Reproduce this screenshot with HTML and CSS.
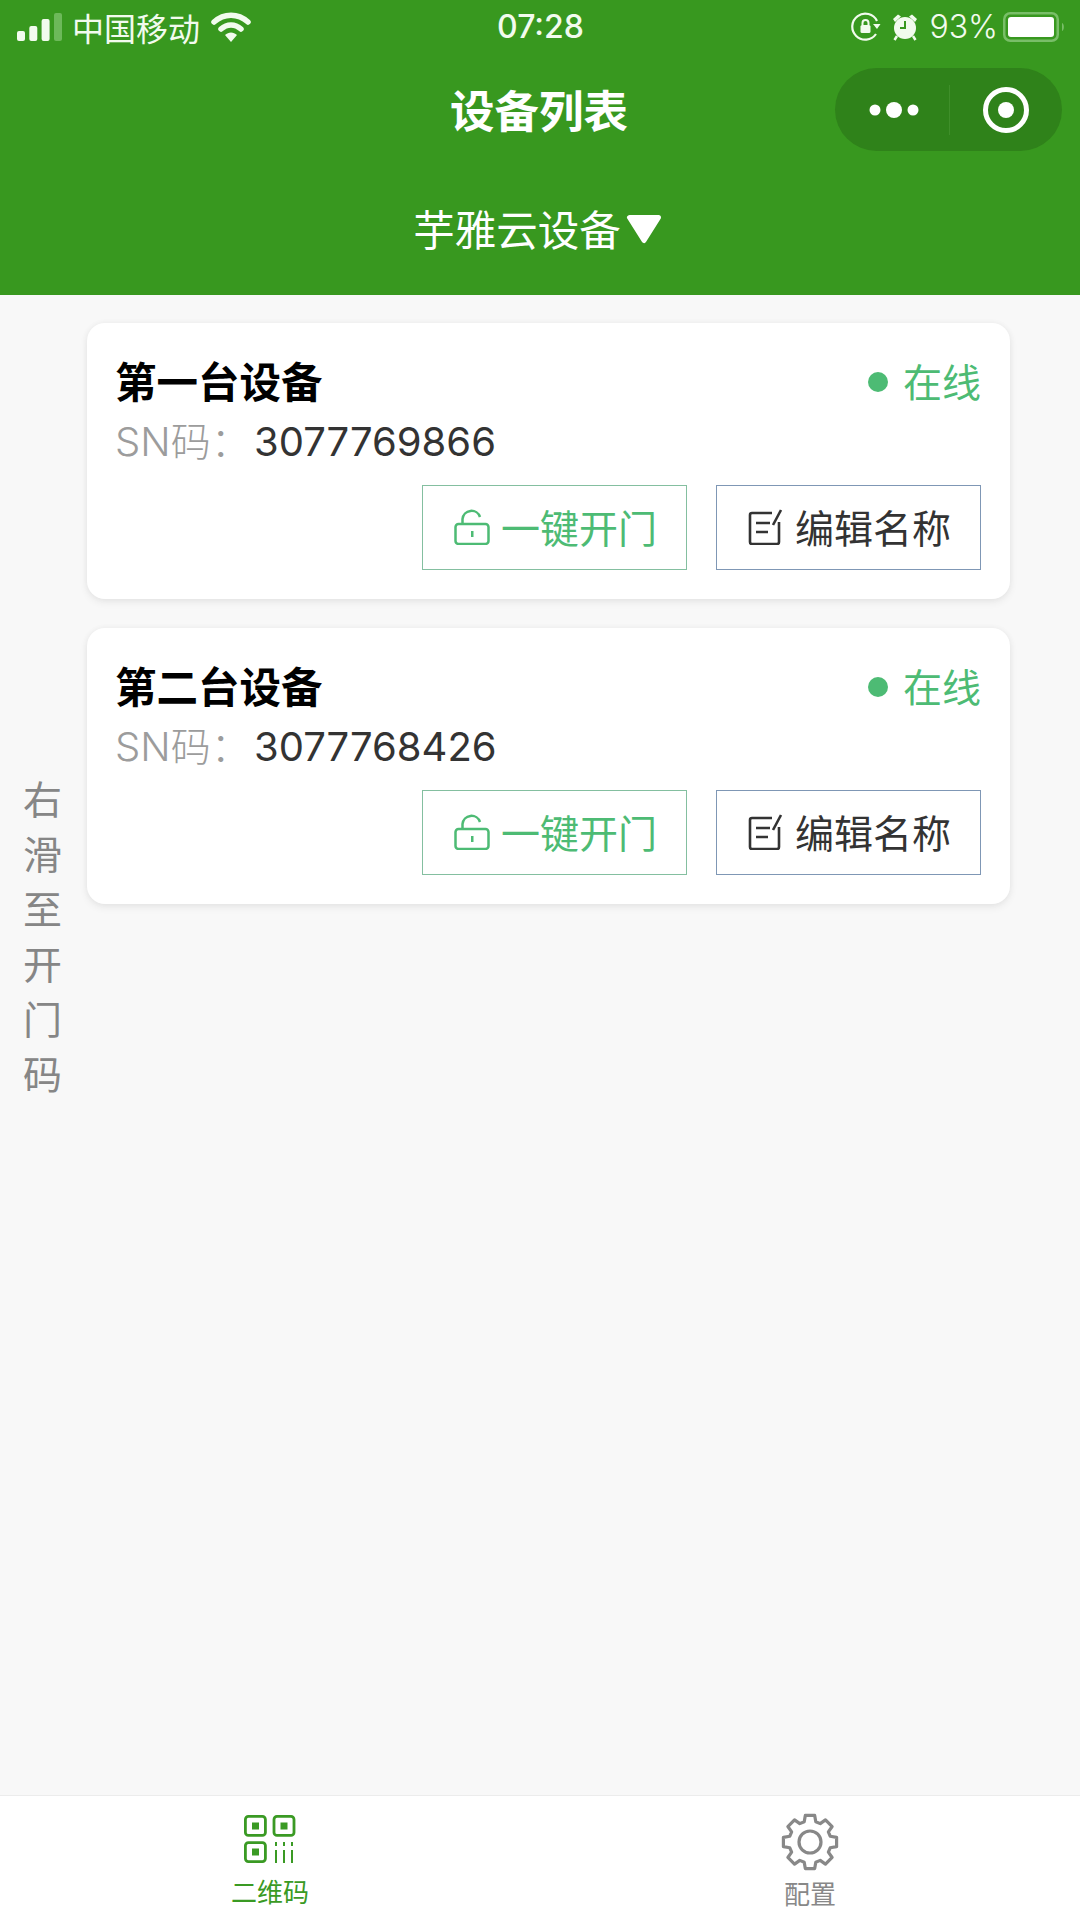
FILE: index.html
```html
<!DOCTYPE html>
<html lang="zh-CN">
<head>
<meta charset="utf-8">
<title>设备列表</title>
<link rel="stylesheet" href="styles.css">
</head>
<body>
<div class="page">
  <header class="header">
    <div class="status">
      <div class="status-left">
        <svg class="signal" viewBox="0 0 46 28" width="46" height="28"><rect x="0" y="18" width="8" height="10" rx="2" fill="#f2fbee"/><rect x="12.300" y="13" width="8" height="15" rx="2" fill="#f2fbee"/><rect x="24.600" y="6" width="8" height="22" rx="2" fill="#f2fbee"/><rect x="37" y="0" width="8" height="28" rx="2" fill="#6db95a"/></svg>
        <span class="carrier">中国移动</span>
        <svg class="wifi" viewBox="0 0 40 30" width="40" height="30"><path d="M3 10C13 1 27 1 37 10" fill="none" stroke="#f2fbee" stroke-width="5.500" stroke-linecap="round"/><path d="M10 17C16 11.500 24 11.500 30 17" fill="none" stroke="#f2fbee" stroke-width="5.500" stroke-linecap="round"/><path d="M14 23C17.500 19.500 22.500 19.500 26 23L20 30Z" fill="#f2fbee"/></svg>
      </div>
      <span class="time">07:28</span>
      <div class="status-right">
        <svg class="rotate" viewBox="0 0 30 30" width="30" height="30"><path d="M25 22A13 13 0 1 1 26 9" fill="none" stroke="#f2fbee" stroke-width="2.200"/><path d="M22 12L29.500 12L26 17Z" fill="#f2fbee"/><rect x="9.500" y="13" width="10" height="8" rx="1.500" fill="#f2fbee"/><path d="M11.500 13V11A3 3 0 0 1 17.500 11V13" fill="none" stroke="#f2fbee" stroke-width="2"/></svg>
        <svg class="alarm" viewBox="0 0 26 28" width="26" height="28"><circle cx="13" cy="15" r="11" fill="#f2fbee"/><path d="M13 8V15H8" fill="none" stroke="#38981f" stroke-width="2"/><path d="M1 6L6 1.500L9 3.500L3 9Z M25 6L20 1.500L17 3.500L23 9Z" fill="#f2fbee"/><path d="M5 23L2.500 27M21 23L23.500 27" stroke="#f2fbee" stroke-width="2.500"/></svg>
        <span class="percent">93%</span>
        <svg class="battery" viewBox="0 0 63 30" width="63" height="30"><rect x="1.250" y="1.250" width="53.500" height="27.500" rx="6" fill="none" stroke="#79be68" stroke-width="2.500"/><rect x="5" y="5" width="46" height="20" rx="3" fill="#fff"/><path d="M59 11C61.500 12 61.500 18 59 19Z" fill="#79be68"/></svg>
      </div>
    </div>
    <div class="nav">
      <h1 class="title">设备列表</h1>
      <div class="capsule">
        <svg viewBox="0 0 227 83" width="227" height="83">
          <circle cx="40" cy="42" r="5.500" fill="#fff"/><circle cx="59" cy="42" r="8" fill="#fff"/><circle cx="78" cy="42" r="5.500" fill="#fff"/>
          <rect x="114" y="17" width="1" height="50" fill="#3f8f2a"/>
          <circle cx="171" cy="42" r="20.500" fill="none" stroke="#fff" stroke-width="5"/><circle cx="171" cy="42" r="8" fill="#fff"/>
        </svg>
      </div>
    </div>
    <div class="selector">
      <span>芋雅云设备</span>
      <svg viewBox="0 0 36 30" width="36" height="30"><path d="M3.500 3.500H32.500L18 26.500Z" fill="#fff" stroke="#fff" stroke-width="5" stroke-linejoin="round"/></svg>
    </div>
  </header>

  <main class="main">
    <div class="side-hint">右滑至开门码</div>
    <div class="cards">
      <article class="card">
        <div class="card-top">
          <h2 class="name">第一台设备</h2>
          <div class="online"><i class="dot"></i><span>在线</span></div>
        </div>
        <p class="sn"><span class="sn-label">SN码：</span><span class="sn-value">3077769866</span></p>
        <div class="actions">
          <button class="btn btn-open">
            <svg viewBox="0 0 36 36" width="36" height="36"><rect x="1.500" y="15" width="33" height="20" rx="3" fill="none" stroke="currentColor" stroke-width="2.500"/><path d="M8.500 15V10A9 9 0 0 1 26 8" fill="none" stroke="currentColor" stroke-width="2.500"/><rect x="17" y="22" width="2.500" height="6" fill="currentColor"/></svg>
            <span>一键开门</span>
          </button>
          <button class="btn btn-edit">
            <svg viewBox="0 0 36 36" width="36" height="36"><path d="M24 4H4Q2 4 2 6V33Q2 35 4 35H29Q31 35 31 33V13" fill="none" stroke="currentColor" stroke-width="2.600"/><path d="M8 14H22M8 23H20" stroke="currentColor" stroke-width="2.600"/><path d="M25 16L33 1" stroke="currentColor" stroke-width="2.600"/></svg>
            <span>编辑名称</span>
          </button>
        </div>
      </article>
      <article class="card">
        <div class="card-top">
          <h2 class="name">第二台设备</h2>
          <div class="online"><i class="dot"></i><span>在线</span></div>
        </div>
        <p class="sn"><span class="sn-label">SN码：</span><span class="sn-value">3077768426</span></p>
        <div class="actions">
          <button class="btn btn-open">
            <svg viewBox="0 0 36 36" width="36" height="36"><rect x="1.500" y="15" width="33" height="20" rx="3" fill="none" stroke="currentColor" stroke-width="2.500"/><path d="M8.500 15V10A9 9 0 0 1 26 8" fill="none" stroke="currentColor" stroke-width="2.500"/><rect x="17" y="22" width="2.500" height="6" fill="currentColor"/></svg>
            <span>一键开门</span>
          </button>
          <button class="btn btn-edit">
            <svg viewBox="0 0 36 36" width="36" height="36"><path d="M24 4H4Q2 4 2 6V33Q2 35 4 35H29Q31 35 31 33V13" fill="none" stroke="currentColor" stroke-width="2.600"/><path d="M8 14H22M8 23H20" stroke="currentColor" stroke-width="2.600"/><path d="M25 16L33 1" stroke="currentColor" stroke-width="2.600"/></svg>
            <span>编辑名称</span>
          </button>
        </div>
      </article>
    </div>
  </main>

  <nav class="tabbar">
    <div class="tab tab-active">
      <svg viewBox="0 0 52 48" width="52" height="48"><g fill="none" stroke="currentColor" stroke-width="2.800"><rect x="1.400" y="1.400" width="20" height="19" rx="3"/><rect x="30" y="1.400" width="20" height="19" rx="3"/><rect x="1.400" y="27.600" width="20" height="19" rx="3"/></g><g fill="currentColor"><rect x="8" y="7.500" width="7" height="7"/><rect x="36.500" y="7.500" width="7" height="7"/><rect x="8" y="33.500" width="7" height="7"/></g><path d="M32 27V31M32 35V48M40 27V31M40 35V48M48 27V31M48 35V48" stroke="currentColor" stroke-width="2"/></svg>
      <span>二维码</span>
    </div>
    <div class="tab tab-config">
      <svg viewBox="0 0 60 60" width="60" height="60"><polygon points="24.210,9.810 25.310,3.410 34.690,3.410 35.790,9.810 40.180,11.630 45.490,7.880 52.120,14.510 48.370,19.820 50.190,24.210 56.590,25.310 56.590,34.690 50.190,35.790 48.370,40.180 52.120,45.490 45.490,52.120 40.180,48.370 35.790,50.190 34.690,56.590 25.310,56.590 24.210,50.190 19.820,48.370 14.510,52.120 7.880,45.490 11.630,40.180 9.810,35.790 3.410,34.690 3.410,25.310 9.810,24.210 11.630,19.820 7.880,14.510 14.510,7.880 19.820,11.630" fill="none" stroke="currentColor" stroke-width="3.200" stroke-linejoin="round"/><circle cx="30" cy="30" r="11" fill="none" stroke="currentColor" stroke-width="3.200"/></svg>
      <span>配置</span>
    </div>
  </nav>
</div>
</body>
</html>
```

FILE: styles.css
```css
* {
  box-sizing: border-box;
}

html,
body {
  margin: 0;
  padding: 0;
}

body {
  font-family: "Noto Sans CJK SC", sans-serif;
  background: #f8f8f8;
}

.page {
  width: 1080px;
  height: 1920px;
  display: flex;
  flex-direction: column;
  overflow: hidden;
}

.header {
  height: 295px;
  flex: none;
  background: #38981f;
  color: #fff;
  display: flex;
  flex-direction: column;
}

.status {
  height: 54px;
  padding: 0 14px 0 17px;
  display: grid;
  grid-template-columns: 1fr auto 1fr;
  align-items: center;
  color: #f2fbee;
}

.status-left,
.status-right {
  display: flex;
  align-items: center;
}

.status-right {
  justify-content: flex-end;
}

.carrier {
  font-size: 32px;
  line-height: 40px;
  margin-left: 9px;
}

.wifi {
  margin-left: 11px;
}

.time {
  font-family: Inter, sans-serif;
  font-size: 32px;
  font-weight: 500;
  line-height: 40px;
  margin-right: 2px;
}

.alarm {
  margin-left: 11px;
}

.percent {
  font-family: Inter, sans-serif;
  font-size: 32px;
  line-height: 40px;
  margin-left: 11px;
  font-weight: 300;
}

.battery {
  margin-left: 5px;
}

.nav {
  height: 112px;
  position: relative;
  display: flex;
  align-items: center;
  justify-content: center;
  padding: 0 2px 3px 0;
}

.title {
  margin: 0;
  font-size: 44.5px;
  font-weight: 700;
  line-height: 60px;
}

.capsule {
  position: absolute;
  right: 18px;
  top: 14px;
  width: 227px;
  height: 83px;
  border-radius: 42px;
  background: #2f821a;
}

.capsule svg {
  display: block;
}

.selector {
  display: flex;
  align-items: center;
  justify-content: center;
  gap: 5px;
  padding: 34px 5px 0 0;
  font-size: 41.5px;
  line-height: 56px;
}

.selector svg {
  margin-top: 2px;
}

.main {
  flex: 1;
  display: flex;
  min-height: 0;
}

.side-hint {
  width: 87px;
  flex: none;
  padding: 475px 26px 0 23px;
  font-size: 39px;
  line-height: 55px;
  color: #868686;
  word-break: break-all;
}

.cards {
  width: 923px;
  padding-top: 28px;
  display: flex;
  flex-direction: column;
  gap: 29px;
}

.card {
  height: 276px;
  background: #fff;
  border-radius: 18px;
  box-shadow: 0 3px 8px rgba(0, 0, 0, 0.07), 0 0 6px rgba(0, 0, 0, 0.04);
  padding: 27px 29px 0 28px;
  display: flex;
  flex-direction: column;
}

.card-top {
  display: flex;
  justify-content: space-between;
  align-items: center;
  height: 60px;
}

.name {
  margin: 0;
  font-size: 41.5px;
  font-weight: 700;
  line-height: 58px;
  color: #000;
}

.online {
  display: flex;
  align-items: center;
  gap: 15px;
  color: #4dbb74;
  font-size: 39px;
  line-height: 58px;
}

.dot {
  width: 20px;
  height: 20px;
  margin-top: 3px;
  border-radius: 50%;
  background: #4dbb74;
}

.sn {
  margin: 0;
  height: 62px;
  padding-top: 2px;
  font-size: 40px;
  line-height: 60px;
  display: flex;
}

.sn-label {
  width: 139px;
  color: #9c9c9c;
  font-family: Inter, "Noto Sans CJK SC", sans-serif;
  font-weight: 300;
}

.sn-value {
  color: #333;
  font-family: Inter, sans-serif;
  font-size: 40px;
}

.actions {
  display: flex;
  justify-content: flex-end;
  gap: 29px;
  margin-top: 13px;
}

.btn {
  width: 265px;
  height: 85px;
  background: #fff;
  border: 1px solid;
  border-radius: 0;
  padding: 0 0 4px 2px;
  display: flex;
  align-items: center;
  justify-content: center;
  gap: 11px;
  font-family: "Noto Sans CJK SC", sans-serif;
  font-size: 39px;
  line-height: 50px;
}

.btn svg {
  margin-top: 3px;
}

.btn-open {
  color: #4dbb74;
  border-color: #84bfa0;
}

.btn-edit {
  color: #333;
  border-color: #7f97b5;
}

.tabbar {
  height: 125px;
  flex: none;
  background: #fff;
  border-top: 1px solid #ececec;
  display: grid;
  grid-template-columns: 1fr 1fr;
}

.tab {
  height: 100%;
  display: flex;
  flex-direction: column;
  align-items: center;
  color: #888;
  font-size: 26px;
  line-height: 36px;
}

.tab svg {
  display: block;
}

.tab-active {
  color: #3a9a24;
  padding-top: 19px;
}

.tab-active span {
  margin-top: 10px;
}

.tab-config {
  padding-top: 16px;
}

.tab-config span {
  margin-top: 3px;
}
```
